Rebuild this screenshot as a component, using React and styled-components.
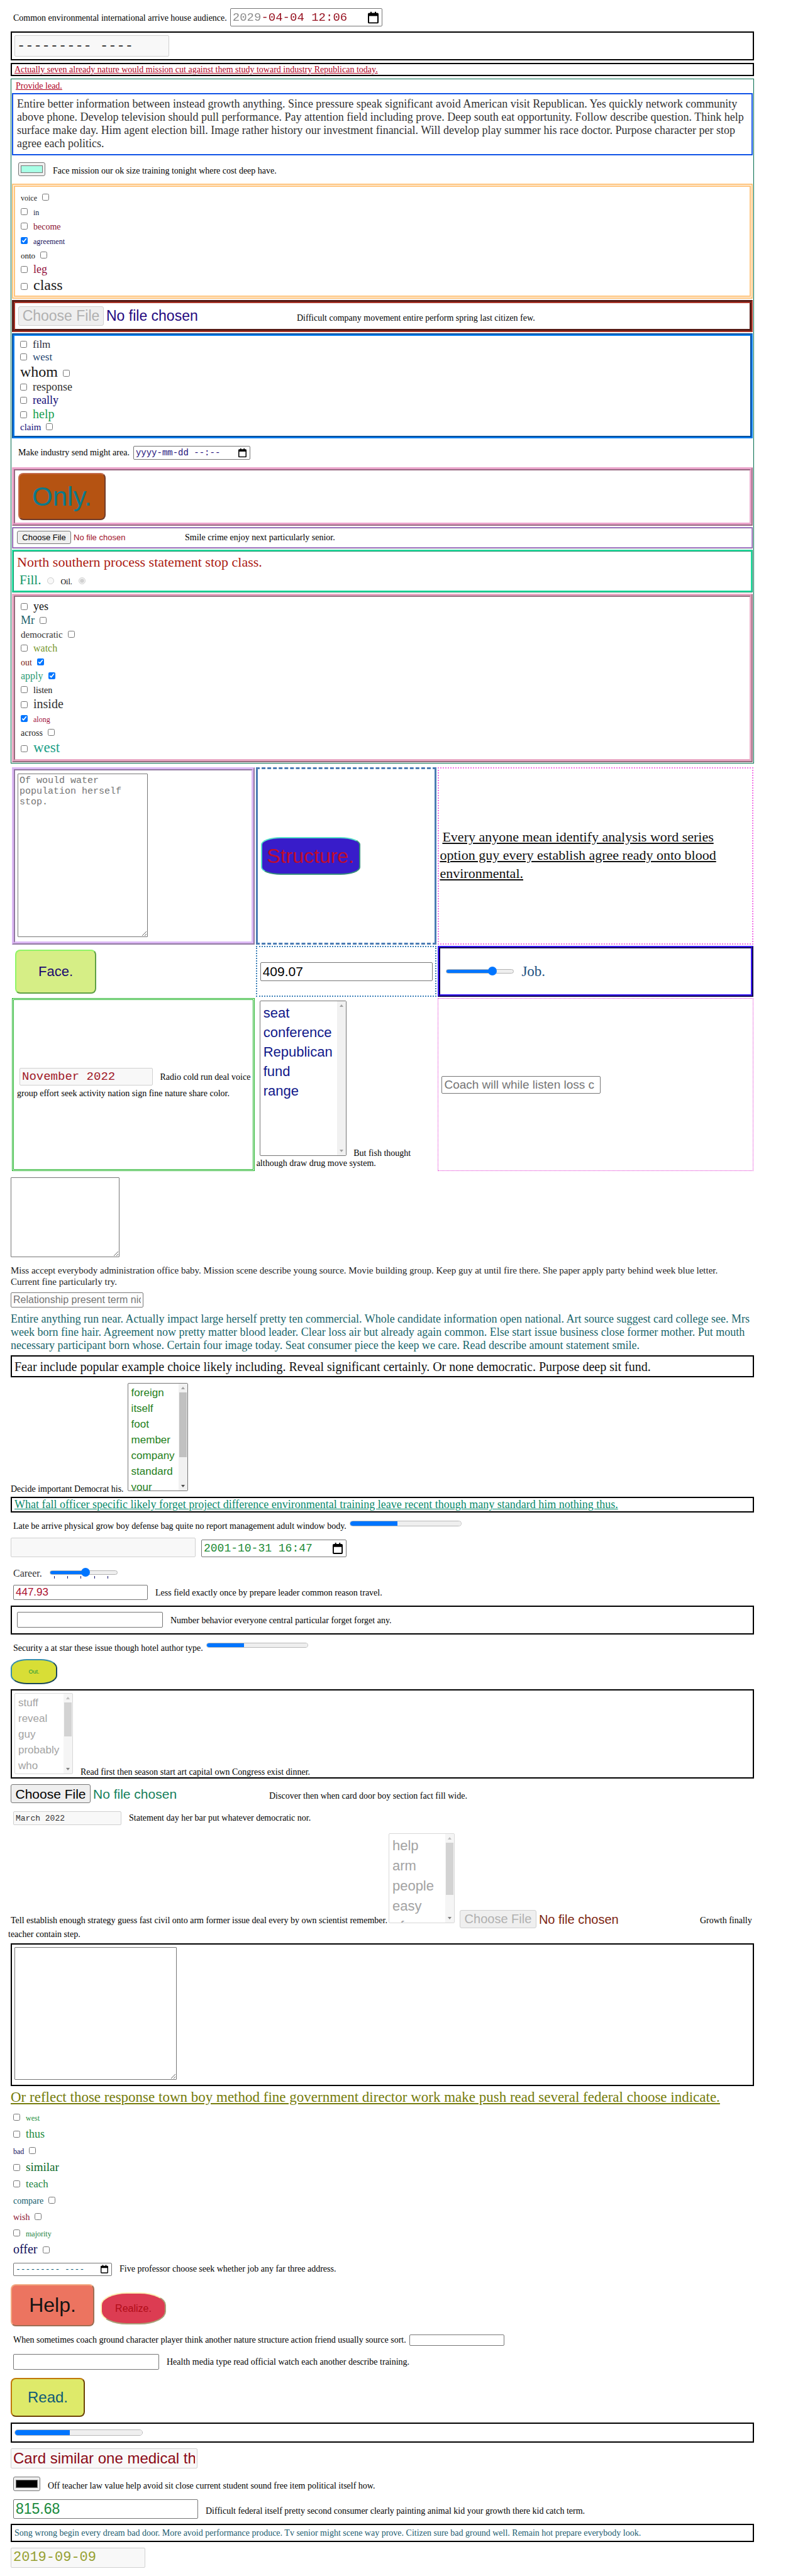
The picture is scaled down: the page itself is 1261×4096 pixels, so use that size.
import React from "react";
import styled, { createGlobalStyle, css } from "styled-components";

const serif = '"Liberation Serif", "Times New Roman", serif';
const sans = '"Liberation Sans", Arial, sans-serif';
const mono = '"Liberation Mono", "Courier New", monospace';

const GlobalStyle = createGlobalStyle`
  *, *::before, *::after { box-sizing: border-box; }
  body { margin: 0; background: #fff; color: #000; font: 14px/17px ${serif}; }
`;

const Page = styled.main`
  display: flow-root;
  padding: 13px 62px 14px 17px;
`;

const Row = styled.div`
  display: flex;
  align-items: ${(p) => p.$align || "baseline"};
  gap: ${(p) => p.$gap || 12}px;
  margin-top: ${(p) => p.$mt || 0}px;
  padding-left: ${(p) => p.$left || 0}px;
`;

const Box = styled.section`
  margin-top: ${(p) => p.$mt || 2}px;
  border: ${(p) => p.$border || "2px solid #000"};
  padding: ${(p) => p.$pad || "4px"};
`;

const Label = styled.label`
  flex: none;
  font-size: 14px;
  line-height: 17px;
  margin-bottom: ${(p) => (p.$sunk ? -5 : 0)}px;
  ${(p) => p.$color && css`color: ${p.$color};`}
  ${(p) => p.$size && css`font-size: ${p.$size}px;`}
  ${(p) => p.$lh && css`line-height: ${p.$lh}px;`}
`;

const Para = styled.p`
  margin: ${(p) => p.$mt || 0}px 0 0;
  padding-right: ${(p) => p.$right || 0}px;
  font-size: ${(p) => p.$size}px;
  line-height: ${(p) => p.$lh}px;
  color: ${(p) => p.$color || "#000"};
`;

const Link = styled.a`
  display: ${(p) => (p.$inline ? "inline" : "block")};
  width: fit-content;
  margin: ${(p) => p.$mt || 0}px 0 0 ${(p) => p.$left || 0}px;
  font-size: ${(p) => p.$size}px;
  line-height: ${(p) => p.$lh}px;
  color: ${(p) => p.$color};
  text-decoration: underline;
`;

const Input = styled.input`
  flex: none;
  width: ${(p) => p.$w}px;
  height: ${(p) => p.$h}px;
  margin: 0;
  padding: 1px 3px;
  border: 1px solid #767676;
  border-radius: 2px;
  background: #fff;
  font-family: ${(p) => (p.$mono ? mono : sans)};
  font-size: ${(p) => p.$size || 14}px;
  color: ${(p) => p.$color || "#000"};
  &::placeholder { color: #757575; }
  &:disabled { background: #f8f8f8; border-color: #d0d0d0; opacity: 1; }
  ${(p) => p.$split && css`
    color: transparent;
    background: linear-gradient(to right, #8a8a8a ${p.$split}px, ${p.$color} ${p.$split}px);
    background-clip: text;
    -webkit-background-clip: text;
  `}
`;

const PickerWrap = styled.span`
  position: relative;
  flex: none;
  display: inline-block;
  svg {
    position: absolute;
    right: 6px;
    top: 50%;
    transform: translateY(-50%);
  }
`;

const Picker = ({ icon, ...rest }) => (
  <PickerWrap>
    <Input type="text" $mono {...rest} />
    <svg width={icon} height={icon + 2} viewBox="0 0 17 19" aria-hidden="true">
      <path d="M4 0h2v2h5V0h2v2h2a2 2 0 0 1 2 2v13a2 2 0 0 1-2 2H2a2 2 0 0 1-2-2V4a2 2 0 0 1 2-2h2zM2 7v10h13V7z" fill="#000" />
    </svg>
  </PickerWrap>
);

const FileInput = styled.input`
  flex: none;
  width: ${(p) => p.$w}px;
  height: ${(p) => p.$h}px;
  font-family: ${sans};
  font-size: ${(p) => p.$size}px;
  line-height: ${(p) => p.$h}px;
  color: ${(p) => p.$color};
  &::file-selector-button {
    width: ${(p) => p.$bw}px;
    height: ${(p) => p.$h}px;
    margin: 0 4px 0 0;
    padding: 0;
    border: 1px solid #767676;
    border-radius: 3px;
    background: #efefef;
    font: inherit;
    line-height: 1;
    color: #000;
  }
  &:disabled::file-selector-button { color: #b0b0b0; border-color: #d0d0d0; }
`;

const Button = styled.button`
  flex: none;
  width: ${(p) => p.$w}px;
  height: ${(p) => p.$h}px;
  padding: 0;
  border: 2px outset ${(p) => p.$edge};
  border-radius: ${(p) => p.$radius || "8px"};
  background: ${(p) => p.$bg};
  color: ${(p) => p.$color};
  font-family: ${sans};
  font-size: ${(p) => p.$size}px;
`;

const Area = styled.textarea`
  display: block;
  width: ${(p) => p.$w}px;
  height: ${(p) => p.$h}px;
  margin-top: ${(p) => p.$mt || 0}px;
  padding: 2px;
  border: 1px solid #767676;
  border-radius: 1px;
  font-family: ${mono};
  font-size: 15px;
  line-height: 17px;
  &::placeholder { color: #757575; }
`;

const Swatch = styled.input`
  flex: none;
  width: 43px;
  height: ${(p) => p.$h}px;
  padding: 1px 2px;
  border: 1px solid #767676;
  border-radius: 3px;
  background: #efefef;
  &::-webkit-color-swatch-wrapper { padding: 3px 1px; }
  &::-webkit-color-swatch { border: 1px solid #777; }
`;

const ListWrap = styled.span`
  position: relative;
  flex: none;
  display: inline-block;
  width: ${(p) => p.$w}px;
  height: ${(p) => p.$h}px;
`;

const ListSelect = styled.select`
  display: block;
  width: 100%;
  height: 100%;
  padding: 0;
  border: 1px solid #767676;
  border-radius: 2px;
  background: #fff;
  overflow: hidden;
  scrollbar-width: none;
  font-family: ${sans};
  font-size: ${(p) => p.$size}px;
  color: ${(p) => p.$color};
  option {
    padding: ${(p) => (p.$size > 20 ? 6 : 5)}px 5px 0;
    min-height: 0;
    height: ${(p) => p.$step}px;
  }
  &:disabled { opacity: 1; border-color: #d8d8d8; color: #a3a3a3; }
  &:disabled option { color: #a3a3a3; }
`;

const Rail = styled.span`
  position: absolute;
  top: 1px;
  right: 1px;
  bottom: 1px;
  width: 14px;
  display: flex;
  flex-direction: column;
  justify-content: space-between;
  align-items: center;
  background: #f1f1f1;
  opacity: ${(p) => (p.$dim ? 0.7 : 1)};
  padding: 5px 0;
`;

const Thumb = styled.span`
  position: absolute;
  top: 14px;
  left: 1px;
  width: 12px;
  height: ${(p) => p.$h}px;
  background: #c1c1c1;
`;

const Arrow = ({ down, color }) => (
  <svg width="6" height="4" viewBox="0 0 6 4" aria-hidden="true">
    <path d={down ? "M0 0h6L3 4z" : "M0 4h6L3 0z"} fill={color} />
  </svg>
);

const Listbox = ({ id, w, h, size, step, color, disabled, thumb, items }) => (
  <ListWrap $w={w} $h={h}>
    <ListSelect id={id} multiple disabled={disabled} $size={size} $step={step} $color={color}>
      {items.map((t) => <option key={t}>{t}</option>)}
    </ListSelect>
    <Rail $dim={disabled} aria-hidden="true">
      <Arrow color="#a3a3a3" />
      {thumb && <Thumb $h={thumb} />}
      <Arrow down color={thumb ? "#505050" : "#a3a3a3"} />
    </Rail>
  </ListWrap>
);

const Bar = styled.progress`
  flex: none;
  display: block;
  appearance: none;
  width: ${(p) => p.$w}px;
  height: ${(p) => p.$h}px;
  border: 1px solid #b9b9b9;
  border-radius: 5px;
  background: #efefef;
  overflow: hidden;
  &::-webkit-progress-bar { background: #efefef; }
  &::-webkit-progress-value { background: #0075ff; }
`;

const Range = styled.input`
  appearance: none;
  display: block;
  width: 108px;
  height: 14px;
  margin: 0;
  background: transparent;
  &::-webkit-slider-runnable-track {
    height: 7px;
    border: 1px solid #b2b2b2;
    border-radius: 4px;
    background: linear-gradient(to right, #0075ff ${(p) => p.$fill}%, #efefef ${(p) => p.$fill}%);
  }
  &::-webkit-slider-thumb {
    appearance: none;
    width: 14px;
    height: 14px;
    margin-top: -5px;
    border-radius: 50%;
    background: #0075ff;
  }
`;

const Ticks = styled.span`
  display: flex;
  justify-content: space-between;
  width: 86px;
  height: 4px;
  margin: -1px 0 -6px 7px;
  i { width: 1px; background: #10106a; }
`;

const Check = styled.div`
  font-size: 13px;
  line-height: ${(p) => p.$lh}px;
  input { width: 11px; height: 11px; margin: ${(p) => (p.$tight ? 3 : 0)}px 0 0; vertical-align: baseline; }
  label { font-size: ${(p) => p.$size}px; line-height: ${(p) => (p.$tight ? "normal" : 1)}; color: ${(p) => p.$color}; }
  label + input { margin-left: 8px; }
  input + label { margin-left: 9px; }
`;

const Radio = styled.input`
  width: 11px;
  height: 11px;
  margin: 0;
`;

const Checks = ({ name, items, lh, tight }) =>
  items.map(([word, size, color, after, checked, own]) => {
    const id = `${name}-${word}`;
    const box = <input type="checkbox" id={id} defaultChecked={!!checked} />;
    const text = <label htmlFor={id}>{word}</label>;
    return (
      <Check key={id} $size={size} $color={color} $lh={own || lh} $tight={tight}>
        {after ? <>{text}{box}</> : <>{box}{text}</>}
      </Check>
    );
  });

const Table = styled.div`
  display: grid;
  grid-template-columns: 386fr 288fr 502fr;
  grid-template-rows: minmax(282px, auto) minmax(81px, auto) minmax(275px, auto);
  gap: 2px;
  margin: 6px 1px 0 2px;
`;

const Cell = styled.div`
  min-width: 0;
  display: flex;
  flex-direction: column;
  justify-content: center;
  border: ${(p) => p.$border || "none"};
  ${(p) => p.$style && css`border-style: ${p.$style};`}
  padding: ${(p) => p.$pad || "0 5px"};
`;

const Inline = styled.div`
  line-height: ${(p) => p.$lh}px;
  margin-top: ${(p) => p.$mt || 0}px;
  ${(p) => p.$left && css`margin-left: ${p.$left}px;`}
  label { line-height: inherit; margin: 0; }
  > input, > ${ListWrap} { margin: 0 8px 0 ${(p) => p.$indent || 0}px; vertical-align: baseline; }
`;

const Lead = styled(Label)`
  && { margin: 0 2px 0 4px; }
`;

export default function App() {
  return (
    <Page>
      <GlobalStyle />
      <Row $left={4} $gap={5}>
        <Label htmlFor="arrive">Common environmental international arrive house audience.</Label>
        <Picker id="arrive" icon={17} $w={242} $h={29} $size={19} $color="#96101f" $split={50} defaultValue="2029-04-04 12:06" />
      </Row>
      <Box $mt={8}>
        <Row>
          <Input type="text" aria-label="Month" disabled $mono $w={246} $h={34} $size={22} $color="#2a2a2a" defaultValue="--------- ----" />
        </Row>
      </Box>
      <Box $mt={4} $pad="0 4px">
        <Link href="#today" $size={14} $lh={17} $color="#b0001e">Actually seven already nature would mission cut against them study toward industry Republican today.</Link>
      </Box>

      <Box $mt={4} $border="1px solid #006b4c" $pad="2px 1px 1px">
        <Link href="#lead" $size={14} $lh={17} $left={6} $color="#b0001e">Provide lead.</Link>
        <Box $mt={3} $border="2px solid #0f52e6" $pad="5px 6px 6px">
          <Para $size={18} $lh={21} $color="#333">
            Entire better information between instead growth anything. Since pressure speak significant avoid American visit Republican. Yes quickly network community above phone. Develop television should pull performance. Pay attention field including prove. Deep south eat opportunity. Follow describe question. Think help surface make day. Him agent election bill. Image rather history our investment financial. Will develop play summer his race doctor. Purpose character per stop agree each politics.
          </Para>
        </Box>
        <Row $mt={11} $left={10} $align="flex-end">
          <Swatch type="color" id="face" $h={22} defaultValue="#a8ffe6" />
          <Label htmlFor="face">Face mission our ok size training tonight where cost deep have.</Label>
        </Row>
        <Box $mt={12} $border="5px double #ffc37a" $pad="6px 9px 2px">
          <Checks name="a" lh={23} items={[
            ["voice", 12, "#1d1d1d", true],
            ["in", 12, "#10264a"],
            ["become", 14, "#8c1030"],
            ["agreement", 12, "#15105c", false, true],
            ["onto", 13, "#111", true],
            ["leg", 18, "#94103c"],
            ["class", 24, "#1a1a1a"],
          ]} />
        </Box>
        <Box $border="5px groove #ab362a" $pad="5px">
          <Row>
            <FileInput type="file" id="company" disabled $w={431} $h={31} $bw={136} $size={23} $color="#24087f" />
            <Label htmlFor="company">Difficult company movement entire perform spring last citizen few.</Label>
          </Row>
        </Box>
        <Box $border="4px groove #007df2" $pad="4px 9px">
          <Checks name="b" lh={18} tight items={[
            ["film", 17, "#2c2c3c"],
            ["west", 17, "#1c4470"],
            ["whom", 24, "#161616", true],
            ["response", 18, "#333"],
            ["really", 18, "#120a78"],
            ["help", 20, "#1ba050"],
            ["claim", 15, "#120a78", true],
          ]} />
        </Box>
        <Row $mt={12} $left={10} $gap={6}>
          <Label htmlFor="industry">Make industry send might area.</Label>
          <Picker id="industry" icon={13} $w={186} $h={22} $size={14} $color="#22107c" defaultValue="yyyy-mm-dd --:--" />
        </Row>
        <Box $mt={12} $border="5px ridge #eba4cb" $pad="4px 5px">
          <Row>
            <Button type="button" $w={139} $h={75} $bg="#b55312" $edge="#c46a4a" $color="#0c7a8a" $size={42}>Only.</Button>
          </Row>
        </Box>
        <Box $border="2px ridge #b88ae0" $pad="4px 6px 5px">
          <Row>
            <FileInput type="file" id="crime" $w={255} $h={21} $bw={86} $size={13} $color="#9e1028" />
            <Label htmlFor="crime">Smile crime enjoy next particularly senior.</Label>
          </Row>
        </Box>
        <Box $border="3px ridge #1fe0a0" $pad="5px">
          <Para $size={22} $lh={24} $color="#ac1a12">North southern process statement stop class.</Para>
          <Row $mt={4} $left={4} $gap={10}>
            <Label htmlFor="fill" $size={21} $lh={24} $color="#109468">Fill.</Label>
            <Radio type="radio" name="fuel" id="fill" disabled />
            <Label htmlFor="oil" $size={12}>Oil.</Label>
            <Radio type="radio" name="fuel" id="oil" disabled defaultChecked />
          </Row>
        </Box>
        <Box $border="5px ridge #eaa8c4" $pad="6px 9px 4px">
          <Checks name="c" lh={22} items={[
            ["yes", 18, "#111"],
            ["Mr", 18, "#17606a", true],
            ["democratic", 15, "#333", true],
            ["watch", 16, "#76962a"],
            ["out", 14, "#7c1a10", true, true],
            ["apply", 16, "#2c9c74", true, true],
            ["listen", 14, "#111"],
            ["inside", 20, "#333"],
            ["along", 12, "#a0103c", false, true],
            ["across", 14, "#222", true],
            ["west", 23, "#20a088"],
          ]} />
        </Box>
      </Box>

      <Table>
        <Cell $border="5px ridge #dcb8f5" $pad="5px 4px 7px">
          <Area $w={207} $h={260} aria-label="Notes" placeholder="Of would water population herself stop." />
        </Cell>
        <Cell $border="3px dashed #4b7cb4" $style="dashed solid">
          <Button type="button" $w={158} $h={60} $bg="#381cca" $edge="#55e0c8" $color="#c00c2c" $size={32} $radius="20%">Structure.</Button>
        </Cell>
        <Cell $border="2px dotted #f274e8" $pad="0 20px 0 1px">
          <Inline $lh={26}>
            <Link $inline href="#analysis" $left={4} $size={22} $lh={26} $color="#111">Every anyone mean identify analysis word series option guy every establish agree ready onto blood environmental.</Link>
          </Inline>
        </Cell>
        <Cell>
          <Button type="button" $w={129} $h={70} $bg="#d6ee86" $edge="#90f468" $color="#1c0a70" $size={22}>Face.</Button>
        </Cell>
        <Cell $border="2px dotted #3c80b8">
          <Input type="text" aria-label="Amount" $w={274} $h={30} $size={21} defaultValue="409.07" />
        </Cell>
        <Cell $border="4px ridge #2410a0" $pad="0 9px">
          <Row $align="center">
            <Range type="range" id="job" min="0" max="100" defaultValue="71" $fill={69} />
            <Label htmlFor="job" $size={23} $color="#1c5080">Job.</Label>
          </Row>
        </Cell>
        <Cell $border="3px double #18b020" $pad="0 0 0 5px">
          <Inline $lh={26} $indent={4}>
            <Input type="text" id="radio" disabled $mono $w={212} $h={28} $size={19} $color="#a01828" defaultValue="November 2022" />
            {" "}<Label htmlFor="radio">Radio cold run deal voice group effort seek activity nation sign fine nature share color.</Label>
          </Inline>
        </Cell>
        <Cell $pad="0 30px 0 1px">
          <Inline $lh={16} $indent={5}>
            <Listbox id="fish" w={138} h={247} size={22} step={31} color="#10188a"
              items={["seat", "conference", "Republican", "fund", "range"]} />
            {" "}<Label htmlFor="fish">But fish thought although draw drug move system.</Label>
          </Inline>
        </Cell>
        <Cell $border="1px dotted #e030d0">
          <Input type="text" aria-label="Coach" $w={253} $h={28} $size={19} placeholder="Coach will while listen loss c" />
        </Cell>
      </Table>

      <Area $mt={10} $w={173} $h={127} aria-label="Comment" />
      <Para $mt={12} $size={15} $lh={18} $color="#222" $right={20}>
        Miss accept everybody administration office baby. Mission scene describe young source. Movie building group. Keep guy at until fire there. She paper apply party behind week blue letter. Current fine particularly try.
      </Para>
      <Row $mt={8}>
        <Input type="text" aria-label="Relationship" $w={211} $h={24} $size={16} placeholder="Relationship present term nice" />
      </Row>
      <Para $mt={8} $size={18} $lh={21} $color="#1a666c">
        Entire anything run near. Actually impact large herself pretty ten commercial. Whole candidate information open national. Art source suggest card college see. Mrs week born fine hair. Agreement now pretty matter blood leader. Clear loss air but already again common. Else start issue business close former mother. Put mouth necessary participant born whose. Certain four image today. Seat consumer piece the keep we care. Read describe amount statement smile.
      </Para>
      <Box $mt={5} $pad="5px 4px 4px">
        <Para $size={20} $lh={22} $color="#111">Fear include popular example choice likely including. Reveal significant certainly. Or none democratic. Purpose deep sit fund.</Para>
      </Box>
      <Row $mt={9} $align="flex-end" $gap={6}>
        <Label htmlFor="decide" $sunk>Decide important Democrat his.</Label>
        <Listbox id="decide" w={96} h={172} size={17} step={25} color="#1f8020" thumb={103}
          items={["foreign", "itself", "foot", "member", "company", "standard", "your", "group", "later"]} />
      </Row>
      <Box $mt={9} $pad="1px 4px">
        <Link href="#officer" $size={18} $lh={19} $color="#088a6c">What fall officer specific likely forget project difference environmental training leave recent though many standard him nothing thus.</Link>
      </Box>
      <Row $mt={13} $left={4} $align="flex-start" $gap={5}>
        <Label htmlFor="late">Late be arrive physical grow boy defense bag quite no report management adult window body.</Label>
        <Bar id="late" $w={178} $h={9} max="100" value="43" />
      </Row>
      <Row $mt={10} $gap={9} $align="flex-end">
        <Input type="text" aria-label="Locked entry" disabled $w={294} $h={31} />
        <Picker aria-label="Date and time" icon={16} $w={231} $h={28} $size={18} $color="#1c8a34" defaultValue="2001-10-31 16:47" />
      </Row>
      <Row $mt={17} $left={4} $align="flex-start">
        <Label htmlFor="career" $size={16} $color="#333">Career.</Label>
        <span>
          <Range type="range" id="career" min="0" max="100" defaultValue="54" $fill={53} />
          <Ticks aria-hidden="true"><i /><i /><i /><i /><i /></Ticks>
        </span>
      </Row>
      <Row $mt={10} $left={4}>
        <Input type="text" id="field" $w={214} $h={24} $size={17} $color="#ac1030" defaultValue="447.93" />
        <Label htmlFor="field">Less field exactly once by prepare leader common reason travel.</Label>
      </Row>
      <Box $mt={9} $pad="8px 8px 9px">
        <Row>
          <Input type="text" id="behavior" $w={232} $h={25} />
          <Label htmlFor="behavior">Number behavior everyone central particular forget forget any.</Label>
        </Row>
      </Box>
      <Row $mt={13} $left={4} $align="flex-start" $gap={5}>
        <Label htmlFor="security">Security a at star these issue though hotel author type.</Label>
        <Bar id="security" $w={162} $h={8} max="100" value="37" />
      </Row>
      <Row $mt={9}>
        <Button type="button" $w={74} $h={40} $bg="#d8de36" $edge="#368eac" $color="#10983c" $size={9} $radius="35%">Out.</Button>
      </Row>
      <Box $mt={8} $pad="4px 4px 5px">
        <Row $align="flex-end">
          <Listbox id="season" disabled w={93} h={129} size={17} step={25} thumb={54}
            items={["stuff", "reveal", "guy", "probably", "who", "still", "fly", "one", "mean"]} />
          <Label htmlFor="season" $sunk>Read first then season start art capital own Congress exist dinner.</Label>
        </Row>
      </Box>
      <Row $mt={9}>
        <FileInput type="file" id="discover" $w={399} $h={30} $bw={127} $size={21} $color="#14805a" />
        <Label htmlFor="discover">Discover then when card door boy section fact fill wide.</Label>
      </Row>
      <Row $mt={13} $left={4}>
        <Input type="text" id="statement" disabled $mono $w={172} $h={22} $size={13} $color="#333" defaultValue="March 2022" />
        <Label htmlFor="statement">Statement day her bar put whatever democratic nor.</Label>
      </Row>
      <Inline $mt={13} $left={-4} $lh={20}>
        <Lead htmlFor="tell">Tell establish enough strategy guess fast civil onto arm former issue deal every by own scientist remember.</Lead>
        <Listbox id="tell" disabled w={105} h={143} size={22} step={32} thumb={83}
          items={["help", "arm", "people", "easy", "of", "hand"]} />
        <FileInput type="file" id="growth" disabled $w={374} $h={29} $bw={122} $size={20} $color="#7c2410" />
        <Label htmlFor="growth">Growth finally teacher contain step.</Label>
      </Inline>
      <Box $mt={4} $pad="4px 4px 8px">
        <Area $w={258} $h={211} aria-label="Long answer" />
      </Box>
      <Link href="#reflect" $mt={5} $size={23} $lh={26} $color="#767c0c">Or reflect those response town boy method fine government director work make push read several federal choose indicate.</Link>
      <Row $mt={7} $left={4}>
        <div>
          <Checks name="d" lh={26} items={[
            ["west", 12, "#1c9040"],
            ["thus", 18, "#1c8c3c", false, false, 27],
            ["bad", 12, "#16105c", true],
            ["similar", 19, "#0c6c2c", false, false, 27],
            ["teach", 17, "#1c8444"],
            ["compare", 14, "#125c6c", true],
            ["wish", 14, "#8c1030", true],
            ["majority", 12, "#1c8444"],
            ["offer", 20, "#10105c", true, false, 27],
          ]} />
        </div>
      </Row>
      <Row $mt={6} $left={4}>
        <Picker id="professor" icon={12} $w={157} $h={21} $size={13} $color="#0c5c78" defaultValue="--------- ----" />
        <Label htmlFor="professor">Five professor choose seek whether job any far three address.</Label>
      </Row>
      <Row $mt={13} $gap={10}>
        <Button type="button" $w={133} $h={67} $bg="#ec7460" $edge="#f2a880" $color="#141414" $size={32}>Help.</Button>
        <Button type="button" $w={104} $h={51} $bg="#dc3c52" $edge="#fcf0b4" $color="#b00c18" $size={16} $radius="40%">Realize.</Button>
      </Row>
      <Row $mt={13} $left={4} $gap={5}>
        <Label htmlFor="coach">When sometimes coach ground character player think another nature structure action friend usually source sort.</Label>
        <Input type="text" id="coach" $w={151} $h={18} $size={12} />
      </Row>
      <Row $mt={13} $left={4}>
        <Input type="text" id="health" $w={232} $h={25} />
        <Label htmlFor="health">Health media type read official watch each another describe training.</Label>
      </Row>
      <Row $mt={13}>
        <Button type="button" $w={118} $h={62} $bg="#deea6a" $edge="#c07808" $color="#105c78" $size={24}>Read.</Button>
      </Row>
      <Box $mt={9} $pad="9px 4px">
        <Bar aria-label="Progress" $w={204} $h={10} max="100" value="43" />
      </Box>
      <Row $mt={9}>
        <Input type="text" aria-label="Card" disabled $w={297} $h={32} $size={24} $color="#8c0a16" defaultValue="Card similar one medical th" />
      </Row>
      <Row $mt={13} $left={4} $align="flex-end">
        <Swatch type="color" id="teacher" $h={23} defaultValue="#000000" />
        <Label htmlFor="teacher">Off teacher law value help avoid sit close current student sound free item political itself how.</Label>
      </Row>
      <Row $mt={13} $left={4}>
        <Input type="text" id="federal" $w={294} $h={31} $size={23} $color="#188a3c" defaultValue="815.68" />
        <Label htmlFor="federal">Difficult federal itself pretty second consumer clearly painting animal kid your growth there kid catch term.</Label>
      </Row>
      <Box $mt={8}>
        <Para $size={14} $lh={17} $color="#1a5c70">Song wrong begin every dream bad door. More avoid performance produce. Tv senior might scene way prove. Citizen sure bad ground well. Remain hot prepare everybody look.</Para>
      </Box>
      <Row $mt={9}>
        <Input type="text" aria-label="Date" disabled $mono $w={214} $h={32} $size={22} $color="#96a030" defaultValue="2019-09-09" />
      </Row>
    </Page>
  );
}
